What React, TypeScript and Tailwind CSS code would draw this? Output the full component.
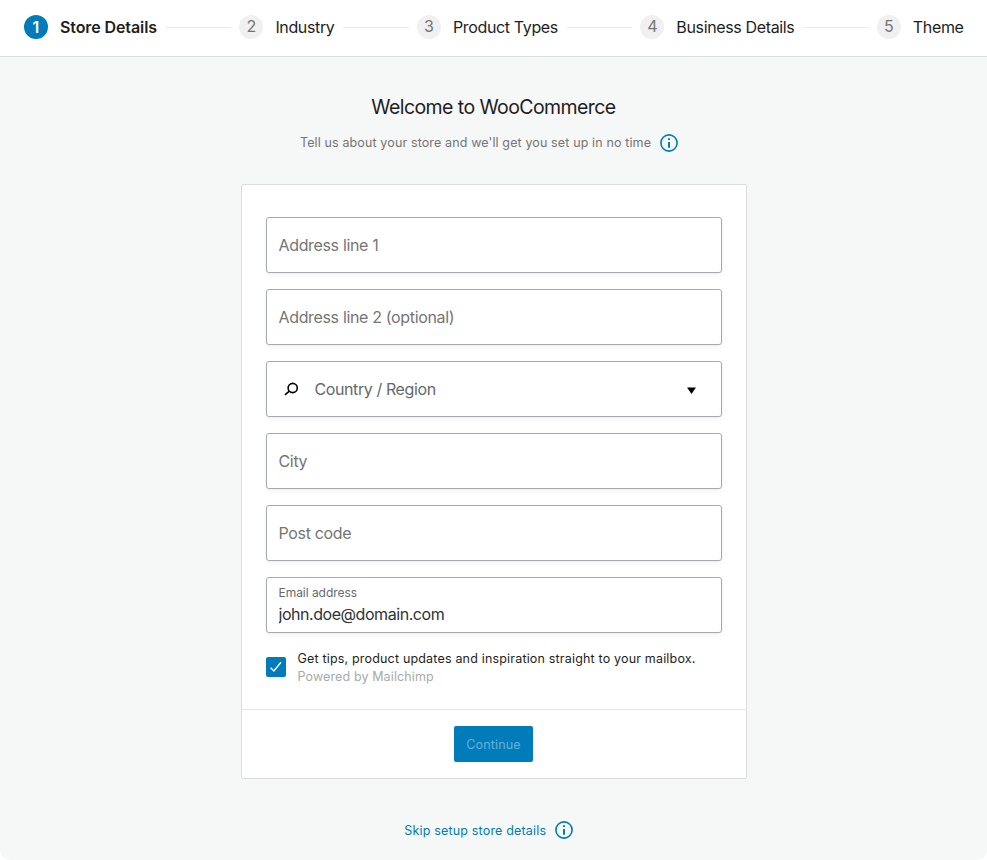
import { Fragment, useState } from 'react';

const steps = ['Store Details', 'Industry', 'Product Types', 'Business Details', 'Theme'];

function InfoIcon() {
  return (
    <svg width="18" height="18" viewBox="0 0 18 18" className="shrink-0 text-[#007cba]">
      <circle cx="9" cy="9" r="8.1" fill="none" stroke="currentColor" strokeWidth="1.6" />
      <path d="M8 4.2h2V6H8zM8 8h2v5.8H8z" fill="currentColor" />
    </svg>
  );
}

function Stepper() {
  return (
    <header className="flex h-[57px] items-center border-b border-[#dcdcde] bg-white pb-[2px] pl-6 pr-[23.5px]">
      {steps.map((label, index) => {
        const active = index === 0;
        return (
          <Fragment key={label}>
            {index > 0 && <div className="ml-[9px] mr-2 h-px flex-1 bg-[#eaeaea]" />}
            <span
              className={`mr-3 flex h-6 w-6 items-center justify-center rounded-full text-base ${
                active ? 'bg-[#007cba] font-semibold text-white' : 'bg-[#f0f0f0] pb-[2px] text-[#757575]'
              }`}
            >
              {index + 1}
            </span>
            <span
              className={`whitespace-nowrap text-base text-[#1e1e1e] ${
                active ? 'font-semibold tracking-[-0.1px]' : 'tracking-[-0.36px]'
              }`}
            >
              {label}
            </span>
          </Fragment>
        );
      })}
    </header>
  );
}

function TextField({ label }: { label: string }) {
  return (
    <input
      type="text"
      placeholder={label}
      className="block h-14 w-full rounded-[3px] border border-[#a7aaad] bg-white px-3 text-base tracking-[-0.34px] text-[#2c3338] shadow-[0_2px_4px_rgba(0,0,0,0.06)] placeholder:text-[#757575]"
    />
  );
}

export default function App() {
  const [email, setEmail] = useState('john.doe@domain.com');
  const [optIn, setOptIn] = useState(true);

  return (
    <div className="h-[860px] overflow-hidden rounded-b-[10px] bg-[#f6f7f7] font-['Inter',sans-serif]">
      <Stepper />

      <main className="flex flex-col items-center">
        <h1 className="mt-9 text-[19.5px] leading-7 tracking-[-0.58px] text-[#1e1e1e]">Welcome to WooCommerce</h1>
        <div className="mt-[13px] flex h-[18px] items-center gap-[9px] pr-[9px]">
          <p className="pb-px text-[12.5px] leading-[18px] tracking-[0.13px] text-[#757575]">
            Tell us about your store and we'll get you set up in no time
          </p>
          <InfoIcon />
        </div>

        <div className="mt-8 w-[506px] rounded-[2px] border border-[#dcdcde] bg-white">
          <div className="flex h-[524px] flex-col gap-4 px-6 pt-8">
            <TextField label="Address line 1" />
            <TextField label="Address line 2 (optional)" />

            <div className="flex h-14 shrink-0 items-center rounded-[3px] border border-[#a7aaad] bg-white pl-[17px] pr-[25px] shadow-[0_2px_4px_rgba(0,0,0,0.06)]">
              <svg width="14" height="14" viewBox="0 0 14 14" fill="none" stroke="#000" strokeWidth="1.6">
                <circle cx="8.7" cy="6" r="4.6" />
                <path d="M5.4 9.2.9 12.9" strokeWidth="1.7" />
              </svg>
              <span className="ml-[17px] flex-1 text-base tracking-[-0.4px] text-[#646970]">Country / Region</span>
              <svg width="9" height="7" viewBox="0 0 9 7" className="mt-[2px]">
                <path d="M0 .5h9L4.5 7z" fill="#000" />
              </svg>
            </div>

            <TextField label="City" />
            <TextField label="Post code" />

            <label className="flex h-14 shrink-0 flex-col rounded-[3px] border border-[#a7aaad] bg-white px-3 pt-[7px] shadow-[0_2px_4px_rgba(0,0,0,0.06)]">
              <span className="text-xs leading-4 tracking-[-0.04px] text-[#646970]">Email address</span>
              <input
                type="email"
                value={email}
                onChange={(e) => setEmail(e.target.value)}
                className="mt-[3px] h-5 text-base leading-5 tracking-[-0.45px] text-[#2c3338] outline-none"
              />
            </label>

            <label className="flex items-start gap-3">
              <input type="checkbox" className="sr-only" checked={optIn} onChange={(e) => setOptIn(e.target.checked)} />
              <span className="mt-2 flex h-5 w-5 items-center justify-center rounded-[2px] bg-[#007cba]">
                {optIn && (
                  <svg width="14" height="14" viewBox="0 0 14 14" fill="none" stroke="#fff" strokeWidth="1.4">
                    <path d="m1.6 7.8 3.3 3.2 7.1-8.8" />
                  </svg>
                )}
              </span>
              <span className="pt-px text-[12.5px] leading-[18px]">
                <span className="block tracking-[0.18px] text-[#1e1e1e]">
                  Get tips, product updates and inspiration straight to your mailbox.
                </span>
                <span className="block tracking-[0.12px] text-[#a7aaad]">Powered by Mailchimp</span>
              </span>
            </label>
          </div>

          <div className="flex h-[69px] items-center justify-center border-t border-[#e2e4e7]">
            <button
              type="button"
              className="h-9 w-[79px] rounded-[2px] bg-[#007cba] pt-[2px] text-[12.5px] tracking-[0.14px] text-[#66b0d6]"
            >
              Continue
            </button>
          </div>
        </div>

        <div className="mt-[42px] flex h-[18px] items-center gap-[9px] pr-[9.5px]">
          <a href="#" className="pt-[2px] text-[12.5px] leading-[18px] tracking-[0.17px] text-[#007cba]">
            Skip setup store details
          </a>
          <InfoIcon />
        </div>
      </main>
    </div>
  );
}
